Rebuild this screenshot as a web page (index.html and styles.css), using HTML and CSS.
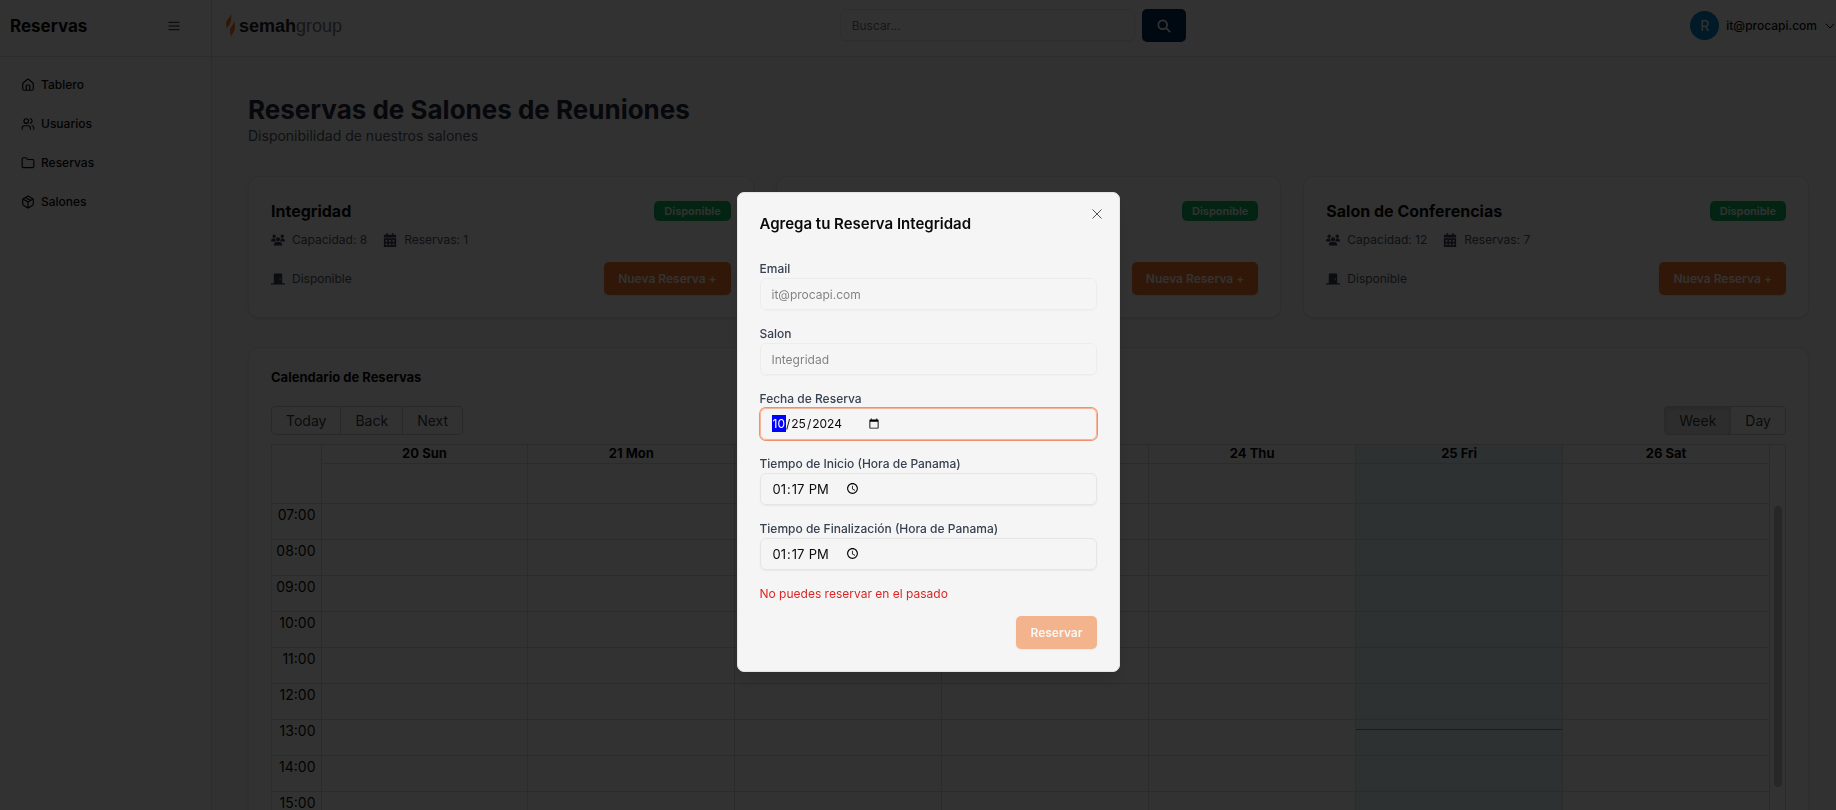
FILE: index.html
```html
<!DOCTYPE html>
<html lang="en-US">
<head>
<meta charset="utf-8">
<title>Reservas</title>
<link rel="stylesheet" href="styles.css">
</head>
<body>
<svg class="sprite" aria-hidden="true">
  <symbol id="i-users" viewBox="0 0 640 512"><path d="M144 0a80 80 0 1 1 0 160A80 80 0 1 1 144 0zM512 0a80 80 0 1 1 0 160A80 80 0 1 1 512 0zM0 298.700C0 239.800 47.800 192 106.700 192h42.700c15.900 0 31 3.500 44.600 9.700c-1.300 7.200-1.900 14.700-1.900 22.300c0 38.200 16.800 72.500 43.300 96H21.300C9.600 320 0 310.400 0 298.700zM405.300 320h-.7c26.600-23.500 43.300-57.800 43.300-96c0-7.600-.7-15-1.900-22.300c13.600-6.300 28.700-9.700 44.600-9.700h42.700C592.200 192 640 239.800 640 298.700c0 11.800-9.600 21.300-21.300 21.300H405.300zM224 224a96 96 0 1 1 192 0 96 96 0 1 1-192 0zM128 485.300C128 411.700 187.700 352 261.300 352H378.700C452.300 352 512 411.700 512 485.300c0 14.700-11.900 26.700-26.700 26.700H154.700c-14.700 0-26.700-11.900-26.700-26.700z"/></symbol>
  <symbol id="i-cal" viewBox="0 0 448 512"><path fill-rule="evenodd" d="M96 0h48v64h160V0h48v64h96v96H0V64h96V0zM0 192h448v320H0V192zm64 64v64h64v-64H64zm128 0v64h64v-64h-64zm128 0v64h64v-64h-64zM64 384v64h64v-64H64zm128 0v64h64v-64h-64zm128 0v64h64v-64h-64z"/></symbol>
  <symbol id="i-door" viewBox="0 0 640 512"><path fill-rule="evenodd" d="M624 448H512V50.800C512 22.800 490.500 0 464 0H176c-26.500 0-48 22.800-48 50.800V448H16c-8.800 0-16 7.200-16 16v32c0 8.800 7.200 16 16 16h608c8.800 0 16-7.200 16-16v-32c0-8.800-7.200-16-16-16zM415 288c-17.700 0-32-14.300-32-32s14.300-32 32-32 32 14.300 32 32-14.300 32-32 32z"/></symbol>
</svg>

<div class="app">
  <aside class="sidebar">
    <div class="sidebar-head">
      <h2 class="brand">Reservas</h2>
      <button class="icon-btn" aria-label="Menú"><svg class="line-icon" viewBox="0 0 15 15"><path d="M2 3.500h11M2 7.500h11M2 11.500h11"/></svg></button>
    </div>
    <nav class="nav">
      <a class="nav-link" href="#"><svg class="line-icon" viewBox="0 0 24 24"><path d="M3 10a2 2 0 0 1 .7-1.500l7-6a2 2 0 0 1 2.600 0l7 6A2 2 0 0 1 21 10v9a2 2 0 0 1-2 2H5a2 2 0 0 1-2-2zM9 21v-8a1 1 0 0 1 1-1h4a1 1 0 0 1 1 1v8"/></svg>Tablero</a>
      <a class="nav-link" href="#"><svg class="line-icon" viewBox="0 0 24 24"><path d="M16 21v-2a4 4 0 0 0-4-4H6a4 4 0 0 0-4 4v2M22 21v-2a4 4 0 0 0-3-3.900M16 3.100a4 4 0 0 1 0 7.800"/><circle cx="9" cy="7" r="4"/></svg>Usuarios</a>
      <a class="nav-link" href="#"><svg class="line-icon" viewBox="0 0 24 24"><path d="M20 20a2 2 0 0 0 2-2V8a2 2 0 0 0-2-2h-7.900a2 2 0 0 1-1.700-.9L9.600 3.900A2 2 0 0 0 7.900 3H4a2 2 0 0 0-2 2v13a2 2 0 0 0 2 2z"/></svg>Reservas</a>
      <a class="nav-link" href="#"><svg class="line-icon" viewBox="0 0 24 24"><path d="M11 21.700a2 2 0 0 0 2 0l7-4a2 2 0 0 0 1-1.700V8a2 2 0 0 0-1-1.700l-7-4a2 2 0 0 0-2 0l-7 4A2 2 0 0 0 3 8v8a2 2 0 0 0 1 1.700zM12 22V12M3.300 7 12 12l8.700-5M7.500 4.300l9 5.100"/></svg>Salones</a>
    </nav>
  </aside>

  <div class="page">
    <header class="topbar">
      <div class="logo">
        <svg class="logo-mark" viewBox="0 0 10 23"><path d="M5 0C5 3 0 5 0 10c0 2 1 3 1 5 1-4 4-4 4-9 0-2 1-4 0-6zM8 7c0 4-4 5-4 10 0 2 1 4 1 6 1-4 4-5 4-10 0-2 0-4-1-6z"/></svg>
        <span class="logo-text"><b>semah</b>group</span>
      </div>
      <form class="search">
        <input class="field search-input" type="search" placeholder="Buscar..." aria-label="Buscar">
        <button class="search-btn" type="button" aria-label="Buscar"><svg viewBox="0 0 16 16"><circle cx="6.500" cy="6.500" r="5"/><path d="M10.500 10.500 15 15"/></svg></button>
      </form>
      <button class="account"><span class="avatar">R</span><span>it@procapi.com</span><svg class="line-icon" viewBox="0 0 24 24"><path d="m4 8 8 8 8-8"/></svg></button>
    </header>

    <main class="main">
      <div class="intro">
        <h1 class="title">Reservas de Salones de Reuniones</h1>
        <p class="subtitle">Disponibilidad de nuestros salones</p>
      </div>

      <section class="rooms">
        <article class="card room">
          <div class="row"><h3 class="room-name">Integridad</h3><span class="badge">Disponible</span></div>
          <div class="facts"><span class="fact"><svg><use href="#i-users"/></svg>Capacidad: 8</span><span class="fact"><svg><use href="#i-cal"/></svg>Reservas: 1</span></div>
          <div class="row"><span class="fact"><svg><use href="#i-door"/></svg>Disponible</span><button class="btn">Nueva Reserva +</button></div>
        </article>
        <article class="card room">
          <div class="row"><h3 class="room-name">Respeto</h3><span class="badge">Disponible</span></div>
          <div class="facts"><span class="fact"><svg><use href="#i-users"/></svg>Capacidad: 8</span><span class="fact"><svg><use href="#i-cal"/></svg>Reservas: 1</span></div>
          <div class="row"><span class="fact"><svg><use href="#i-door"/></svg>Disponible</span><button class="btn">Nueva Reserva +</button></div>
        </article>
        <article class="card room">
          <div class="row"><h3 class="room-name">Salon de Conferencias</h3><span class="badge">Disponible</span></div>
          <div class="facts"><span class="fact"><svg><use href="#i-users"/></svg>Capacidad: 12</span><span class="fact"><svg><use href="#i-cal"/></svg>Reservas: 7</span></div>
          <div class="row"><span class="fact"><svg><use href="#i-door"/></svg>Disponible</span><button class="btn">Nueva Reserva +</button></div>
        </article>
      </section>

      <section class="card calendar">
        <h3 class="cal-title">Calendario de Reservas</h3>
        <div class="row toolbar">
          <div class="group"><button>Today</button><button>Back</button><button>Next</button></div>
          <div class="group"><button class="active">Week</button><button>Day</button></div>
        </div>
        <div class="cal-frame">
          <table class="week">
            <colgroup><col class="col-time"><col span="7"></colgroup>
            <thead>
              <tr class="days"><th rowspan="2"></th><th>20 Sun</th><th>21 Mon</th><th>22 Tue</th><th>23 Wed</th><th>24 Thu</th><th class="today">25 Fri</th><th>26 Sat</th></tr>
              <tr class="allday"><td></td><td></td><td></td><td></td><td></td><td class="today"></td><td></td></tr>
            </thead>
            <tbody>
              <tr><th>07:00</th><td></td><td></td><td></td><td></td><td></td><td class="today"></td><td></td></tr>
              <tr><th>08:00</th><td></td><td></td><td></td><td></td><td></td><td class="today"></td><td></td></tr>
              <tr><th>09:00</th><td></td><td></td><td></td><td></td><td></td><td class="today"></td><td></td></tr>
              <tr><th>10:00</th><td></td><td></td><td></td><td></td><td></td><td class="today"></td><td></td></tr>
              <tr><th>11:00</th><td></td><td></td><td></td><td></td><td></td><td class="today"></td><td></td></tr>
              <tr><th>12:00</th><td></td><td></td><td></td><td></td><td></td><td class="today"></td><td></td></tr>
              <tr><th>13:00</th><td></td><td></td><td></td><td></td><td></td><td class="today"><div class="now"></div></td><td></td></tr>
              <tr><th>14:00</th><td></td><td></td><td></td><td></td><td></td><td class="today"></td><td></td></tr>
              <tr><th>15:00</th><td></td><td></td><td></td><td></td><td></td><td class="today"></td><td></td></tr>
            </tbody>
          </table>
          <div class="scroll"><div class="thumb"></div></div>
        </div>
      </section>
    </main>
  </div>
</div>

<div class="overlay">
  <form class="modal" role="dialog" aria-labelledby="dlg-title">
    <button class="close" type="button" aria-label="Cerrar"><svg class="line-icon" viewBox="0 0 15 15"><path d="m3 3 9 9M12 3l-9 9"/></svg></button>
    <h2 class="modal-title" id="dlg-title">Agrega tu Reserva Integridad</h2>
    <div class="form-row"><label for="email">Email</label><input class="field" id="email" type="email" value="it@procapi.com" disabled></div>
    <div class="form-row"><label for="salon">Salon</label><input class="field" id="salon" type="text" value="Integridad" disabled></div>
    <div class="form-row"><label for="fecha">Fecha de Reserva</label><input class="field current" id="fecha" type="date" value="2024-10-25"></div>
    <div class="form-row"><label for="inicio">Tiempo de Inicio (Hora de Panama)</label><input class="field time" id="inicio" type="time" value="13:17"></div>
    <div class="form-row"><label for="fin">Tiempo de Finalización (Hora de Panama)</label><input class="field time" id="fin" type="time" value="13:17"></div>
    <p class="error">No puedes reservar en el pasado</p>
    <button class="btn submit" type="submit" disabled>Reservar</button>
  </form>
</div>
</body>
</html>
```

FILE: styles.css
```css
* { box-sizing: border-box; margin: 0; }
body { font: 12px/18px Inter, "Liberation Sans", sans-serif; color: #0a0a0a; background: #f5f5f5; height: 100vh; overflow: hidden; }
button, input { font: inherit; color: inherit; }
button { border: 0; background: none; padding: 0; }
a { color: inherit; text-decoration: none; }
.sprite { display: none; }
.line-icon { width: 14px; height: 14px; fill: none; stroke: currentColor; stroke-width: 2; stroke-linecap: round; stroke-linejoin: round; flex: none; }

.app { display: flex; height: 100vh; }
.sidebar { width: 212px; flex: none; border-right: 1px solid #ddd; background: #fafafa; }
.sidebar-head { height: 57px; padding: 0 30px 5px 10px; display: flex; align-items: center; justify-content: space-between; border-bottom: 1px solid #ddd; }
.sidebar-head .line-icon { stroke-width: 1; display: block; }
.brand { font-size: 17px; line-height: 24px; font-weight: 700; }
.nav { padding: 12px 7px; display: flex; flex-direction: column; gap: 7px; }
.nav-link { display: flex; align-items: center; gap: 6px; height: 32px; padding: 0 14px; font-weight: 500; }

.page { flex: 1; min-width: 0; display: flex; flex-direction: column; }
.topbar { flex: none; height: 57px; padding: 0 0 5px 14px; display: flex; justify-content: space-between; align-items: center; border-bottom: 1px solid #ddd; background: #fafafa; }
.logo { display: flex; align-items: center; gap: 3px; width: 109px; }
.logo-mark { flex: none; width: 10px; height: 23px; fill: #f37426; }
.logo-text { font: 18px/24px "Liberation Sans", sans-serif; color: #737373; }
.logo-text b { color: #222; }
.search { display: flex; gap: 7px; width: 346px; }
.field { width: 100%; height: 32px; padding: 0 11px; border: 1px solid #e5e5e5; border-radius: 6px; background: transparent; box-shadow: 0 1px 2px rgb(0 0 0 / 6%); outline: 0; appearance: none; }
.field::placeholder { color: #737373; opacity: 1; }
.search-btn { width: 44px; height: 33px; flex: none; border-radius: 5px; background: #003054; display: grid; place-items: center; }
.search-btn svg { width: 14px; height: 14px; fill: none; stroke: #fff; stroke-width: 2; }
.account { display: flex; align-items: center; gap: 7px; font-weight: 500; }
.account .line-icon { width: 12px; height: 12px; }
.avatar { width: 29px; height: 29px; border-radius: 50%; background: #0284c7; color: #fff; font-size: 14px; font-weight: 400; display: grid; place-items: center; }

.main { flex: 1; min-height: 0; overflow: hidden; padding: 37px 27px 0 36px; }
.title { font-size: 26px; line-height: 32px; font-weight: 700; color: #1f2937; }
.subtitle { font-size: 14px; line-height: 20px; color: #4b5563; }
.rooms { display: grid; grid-template-columns: repeat(3, 1fr); gap: 22px; margin: 30px 0 29px; }
.card { background: #fafafa; border: 1px solid #e5e5e5; border-radius: 11px; box-shadow: 0 1px 3px rgb(0 0 0 / 10%); padding: 22px; }
.row { display: flex; align-items: center; justify-content: space-between; }
.room-name { font-size: 16px; line-height: 24px; font-weight: 700; }
.badge { padding: 1px 10px; border-radius: 5px; background: #10b060; color: #fafafa; font-size: 11px; font-weight: 600; }
.facts { display: flex; gap: 16px; margin: 8px 0 13px; }
.fact { display: flex; align-items: center; gap: 7px; color: #4b5563; }
.fact svg { width: 14px; height: 14px; fill: #374151; }
.btn { height: 33px; padding: 0 14px; border-radius: 5px; background: #f37426; color: #fafafa; font-weight: 600; box-shadow: 0 1px 2px rgb(0 0 0 / 10%); }

.calendar { padding-top: 20px; }
.cal-title { font-size: 13px; line-height: 18px; font-weight: 700; }
.toolbar { margin: 20px 0 9px; }
.group { display: flex; border: 1px solid #ccc; border-radius: 4px; color: #373a3c; }
.group button { height: 27px; padding: 0 14px; font-size: 14px; }
.group button + button { border-left: 1px solid #ccc; }
.group .active { background: #e0e0e0; box-shadow: inset 0 2px 4px rgb(0 0 0 / 12%); }
.cal-frame { display: flex; border: 1px solid #d4d4d4; }
.week { flex: 1; width: 100%; table-layout: fixed; border-collapse: collapse; }
.col-time { width: 49px; }
.week th, .week td { padding: 0; border-right: 1px solid #d4d4d4; border-bottom: 1px solid #d4d4d4; }
.days th { height: 18px; font-size: 13px; line-height: 17px; font-weight: 700; }
.allday td { height: 40px; }
.week tbody th { height: 36px; padding: 0 5px 0 0; vertical-align: top; text-align: right; font-size: 14px; line-height: 22px; font-weight: 400; }
.week .today { background: #e6f3fb; vertical-align: top; }
.now { height: 1px; margin-top: 9px; background: #74ad31; }
.scroll { flex: none; width: 15px; padding: 61px 3px 0 4px; }
.thumb { height: 281px; border-radius: 4px; background: #c1c1c1; }

.overlay { position: fixed; inset: 0; background: rgb(0 0 0 / 80%); display: grid; place-items: center; padding-top: 54px; padding-left: 20px; }
.modal { position: relative; width: 383px; padding: 22px; display: flex; flex-direction: column; border: 1px solid #e5e5e5; border-radius: 7px; background: #f5f5f5; box-shadow: 0 10px 15px rgb(0 0 0 / 10%); }
.modal-title { font-size: 15px; line-height: 18px; font-weight: 600; margin-bottom: 27px; }
.close { position: absolute; top: 14px; right: 15px; color: #444; }
.close .line-icon { display: block; stroke-width: 1; }
.form-row { margin-bottom: 15px; }
.form-row label { display: block; line-height: 18px; font-weight: 500; color: #374151; }
.form-row .field { display: flex; align-items: center; }
.field:disabled { opacity: .5; }
.field.current { border-color: #f5b496; box-shadow: 0 0 0 1px #f39067; }
.field.time { font-size: 13px; }
.field::-webkit-datetime-edit-month-field { background: #00f; color: #fff; }
.error { margin-bottom: 13px; color: #dc2626; }
.submit { align-self: flex-end; }
.submit:disabled { opacity: .5; }
```
